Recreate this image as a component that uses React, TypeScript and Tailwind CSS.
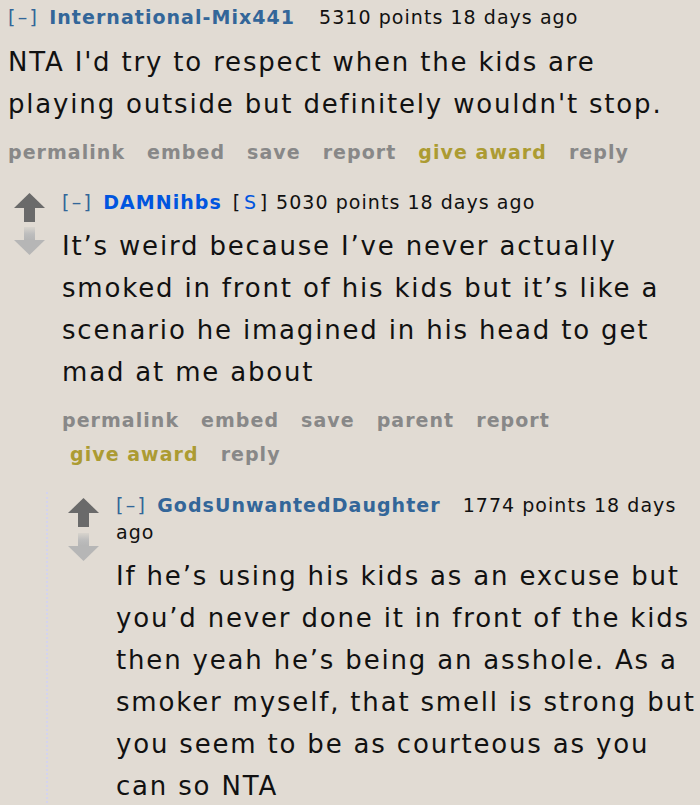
import React from 'react';

interface Link {
  label: string;
  award?: boolean;
}

const UpArrow: React.FC = () => (
  <svg width="31" height="29" viewBox="0 0 31 29">
    <polygon points="0,15 15.5,0 31,15" fill="#6a6a6a" />
    <rect x="10" y="14" width="11" height="15" fill="#6a6a6a" />
  </svg>
);

const DownArrow: React.FC = () => (
  <svg width="31" height="28" viewBox="0 0 31 28">
    <defs>
      <linearGradient id="fade" x1="0" y1="0" x2="0" y2="1">
        <stop offset="0" stopColor="#d8d4cd" />
        <stop offset="0.5" stopColor="#bdbdbd" />
        <stop offset="1" stopColor="#b4b4b4" />
      </linearGradient>
    </defs>
    <rect x="10" y="0" width="11" height="14" fill="url(#fade)" />
    <polygon points="0,13 31,13 15.5,28" fill="#b6b6b6" />
  </svg>
);

const Links: React.FC<{ links: Link[]; className?: string }> = ({ links, className = '' }) => (
  <div
    className={`flex gap-x-[22px] text-[19px] leading-[34px] font-bold tracking-[0.055em] text-[#888888] ${className}`}
  >
    {links.map((l) => (
      <span key={l.label} className={l.award ? 'text-[#ac9b32]' : ''}>
        {l.label}
      </span>
    ))}
  </div>
);

const Collapse: React.FC = () => <span className="text-[#336699] tracking-[0.12em]">[–]</span>;

const App: React.FC = () => {
  return (
    <div className="h-[805px] w-[700px] overflow-hidden bg-[#e1dbd3] text-[#111111] font-['DejaVu_Sans','Verdana',sans-serif]">
      {/* top comment */}
      <div className="pl-2 pr-1">
        <div className="text-[19px] leading-[34px] tracking-[0.055em] whitespace-nowrap">
          <Collapse />
          <span className="ml-[10px] font-bold text-[#336699]">International-Mix441</span>
          <span className="ml-[24px]">5310 points 18 days ago</span>
        </div>
        <div className="mt-[7px] text-[26px] leading-[42px] tracking-[0.07em]">
          NTA I'd try to respect when the kids are playing outside but definitely wouldn't stop.
        </div>
        <div className="mt-[10px]">
          <Links
            links={[
              { label: 'permalink' },
              { label: 'embed' },
              { label: 'save' },
              { label: 'report' },
              { label: 'give award', award: true },
              { label: 'reply' },
            ]}
          />
        </div>
      </div>

      {/* reply */}
      <div className="mt-[16px] pl-[14px]">
        <div className="flex">
          <div className="w-[48px] shrink-0 flex flex-col pt-[8px] gap-[5px]">
            <UpArrow />
            <DownArrow />
          </div>
          <div className="flex-1 pr-1">
            <div className="text-[19px] leading-[34px] tracking-[0.055em] whitespace-nowrap">
              <Collapse />
              <span className="ml-[10px] font-bold text-[#0055df]">DAMNihbs</span>
              <span className="ml-[11px] tracking-[0.2em]">
                [<span className="text-[#0055df]">S</span>]
              </span>
              <span className="ml-[5px]">5030 points 18 days ago</span>
            </div>
            <div className="mt-[6px] text-[26px] leading-[42px] tracking-[0.07em]">
              It’s weird because I’ve never actually smoked in front of his kids but it’s like a scenario
              he imagined in his head to get mad at me about
            </div>
            <div className="mt-[10px]">
              <Links
                links={[
                  { label: 'permalink' },
                  { label: 'embed' },
                  { label: 'save' },
                  { label: 'parent' },
                  { label: 'report' },
                ]}
              />
              <Links
                className="pl-[8px]"
                links={[{ label: 'give award', award: true }, { label: 'reply' }]}
              />
            </div>
          </div>
        </div>

        {/* nested reply */}
        <div className="ml-[32px] mt-[21px] border-l-2 border-dotted border-[#d4d4ee] pl-[20px] pb-[200px]">
          <div className="flex">
            <div className="w-[48px] shrink-0 flex flex-col pt-[6px] gap-[6px]">
              <UpArrow />
              <DownArrow />
            </div>
            <div className="flex-1 pr-1">
              <div className="text-[19px] leading-[27px] tracking-[0.055em]">
                <Collapse />
                <span className="ml-[10px] font-bold text-[#336699]">GodsUnwantedDaughter</span>
                <span className="ml-[22px]">1774 points 18 days ago</span>
              </div>
              <div className="mt-[9px] text-[26px] leading-[42px] tracking-[0.07em]">
                If he’s using his kids as an excuse but you’d never done it in front of the kids then yeah
                he’s being an asshole. As a smoker myself, that smell is strong but you seem to be as
                courteous as you can so NTA
              </div>
            </div>
          </div>
        </div>
      </div>
    </div>
  );
};

export default App;
